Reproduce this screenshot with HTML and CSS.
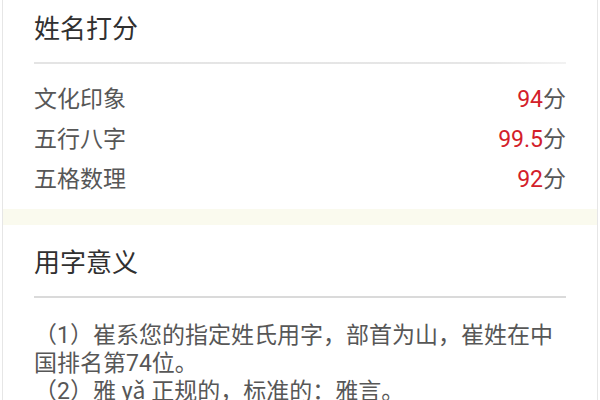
FILE: index.html
```html
<!DOCTYPE html>
<html lang="zh-CN">
<head>
<meta charset="utf-8">
<title>姓名打分</title>
<link rel="stylesheet" href="styles.css">
</head>
<body>
<div class="page">
  <section class="card card-score">
    <h2 class="card-title">姓名打分</h2>
    <div class="divider divider-soft"></div>
    <ul class="scores">
      <li class="score-row"><span class="label">文化印象</span><span class="value"><em>94</em>分</span></li>
      <li class="score-row"><span class="label">五行八字</span><span class="value"><em>99.5</em>分</span></li>
      <li class="score-row"><span class="label">五格数理</span><span class="value"><em>92</em>分</span></li>
    </ul>
  </section>
  <div class="band"></div>
  <section class="card card-meaning">
    <h2 class="card-title">用字意义</h2>
    <div class="divider divider-hard"></div>
    <p class="meaning">（1）崔系您的指定姓氏用字，部首为山，崔姓在中国排名第74位。<br>（2）雅 yǎ 正规的，标准的：雅言。</p>
  </section>
</div>
</body>
</html>
```

FILE: styles.css
```css
html, body {
  margin: 0;
  padding: 0;
  background: #ffffff;
}
body {
  width: 600px;
  height: 400px;
  overflow: hidden;
  font-family: Roboto, "Noto Sans CJK SC", sans-serif;
}
.page {
  margin: 0 2px;
  height: 400px;
  border-left: 1px solid #e6e6e6;
  border-right: 1px solid #e6e6e6;
  background: #ffffff;
}
.card {
  padding: 0 31px;
}
.card-score {
  padding-top: 9px;
  padding-bottom: 12px;
}
.card-meaning {
  padding-top: 18px;
}
.card-title {
  margin: 0;
  font-family: "Noto Sans CJK SC", sans-serif;
  font-weight: 400;
  font-size: 26px;
  line-height: 36px;
  color: #303030;
}
.divider {
  height: 2px;
  margin-top: 17px;
}
.divider-soft {
  background: linear-gradient(to right, #e4e4e4 0%, #e6e6e6 85%, #f2f2f2 100%);
}
.divider-hard {
  background: #dadada;
}
.scores {
  list-style: none;
  margin: 13px 0 0;
  padding: 0;
}
.score-row {
  display: flex;
  justify-content: space-between;
  align-items: center;
  height: 40px;
  font-size: 23px;
  color: #575757;
}
.label {
  font-family: "Noto Sans CJK SC", sans-serif;
}
.value em {
  font-style: normal;
  color: #d3202a;
}
.band {
  height: 16px;
  background: #fafaee;
}
.meaning {
  margin: 24px 0 0;
  font-size: 23px;
  line-height: 28px;
  color: #575757;
}
```
